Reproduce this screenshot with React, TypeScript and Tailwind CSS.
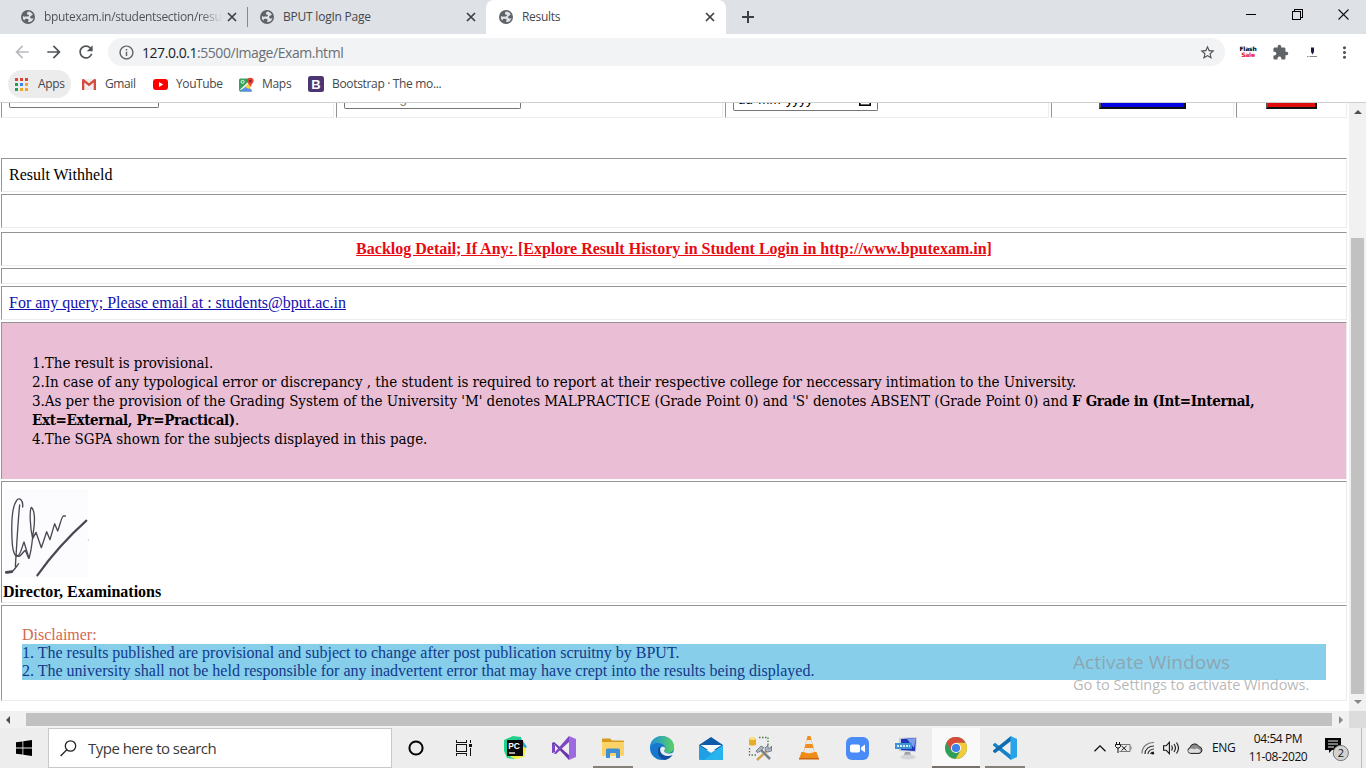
import React from "react";
import {
  MdArrowBack,
  MdArrowForward,
  MdRefresh,
  MdInfoOutline,
  MdStarBorder,
  MdExtension,
  MdMoreVert,
} from "react-icons/md";

const cell = "border border-t-[#949494] border-l-[#949494] border-r-[#ececec] border-b-[#ececec]";

function Globe() {
  return (
    <svg viewBox="0 0 28 28" className="h-[14px] w-[14px] shrink-0">
      <circle cx="14" cy="14" r="14" fill="#5f6368" />
      <path
        d="M15 3c-2 1-4 3-3 5 1 2 4 1 4 3s-3 2-6 2c-2 0-3 1-6-1-1 5 1 8 3 9l1-3c3-1 6-1 7 1s-1 3-1 5c6 1 10-3 11-8-2 1-4 2-6 0s0-4 2-5 3-1 2-3c-2-3-5-5-8-5z"
        fill="#dfe2e6"
      />
    </svg>
  );
}

function CloseIcon() {
  return (
    <svg width="14" height="14" viewBox="0 0 14 14" className="ml-auto shrink-0" stroke="#3c4043" strokeWidth="1.700">
      <path d="M3 3l8 8M11 3l-8 8" />
    </svg>
  );
}

function Tab({ title, active, fade }: { title: string; active?: boolean; fade?: boolean }) {
  return (
    <div
      className={
        active
          ? "flex h-[34px] w-[240px] items-center rounded-t-[8px] bg-white pl-[13px] pr-[9px]"
          : "flex h-[34px] w-[239px] items-center pl-[13px] pr-[8px]"
      }
    >
      <Globe />
      <span
        className={
          fade
            ? "ml-[9px] w-[178px] whitespace-nowrap bg-linear-to-r from-[#4b4e52] from-88% to-transparent bg-clip-text text-[12px] tracking-[-0.32px] text-transparent"
            : "ml-[9px] w-[180px] whitespace-nowrap text-[12px] tracking-[-0.3px] text-[#45484c]"
        }
      >
        {title}
      </span>
      <CloseIcon />
    </div>
  );
}

function TabStrip() {
  return (
    <div className="flex h-[34px] shrink-0 bg-[#dee1e6]">
      <div className="flex w-[247px] justify-end">
        <Tab title="bputexam.in/studentsection/resu" fade />
      </div>
      <div className="mt-[7px] h-[20px] w-px bg-[#85898e]" />
      <div className="flex w-[238px] items-center pl-[12px] pr-[8px]">
        <Globe />
        <span className="ml-[9px] text-[12px] tracking-[-0.22px] text-[#45484c]">BPUT logIn Page</span>
        <CloseIcon />
      </div>
      <Tab title="Results" active />
      <div className="flex w-[43px] items-center justify-center">
        <svg width="12" height="12" viewBox="0 0 12 12" stroke="#3c4043" strokeWidth="2">
          <path d="M6 0v12M0 6h12" />
        </svg>
      </div>
      <div className="ml-auto flex h-[29px] items-center">
        <div className="flex w-[46px] justify-center">
          <div className="h-px w-[10px] bg-black" />
        </div>
        <div className="flex w-[46px] justify-center">
          <svg width="11" height="11" viewBox="0 0 11 11" fill="none" stroke="#000" shapeRendering="crispEdges">
            <path d="M2.5 2.5V.5h8v8h-2M.5 2.500h8v8h-8z" />
          </svg>
        </div>
        <div className="flex w-[46px] justify-center">
          <svg width="11" height="11" viewBox="0 0 11 11" stroke="#111" strokeWidth="1.1">
            <path d="M.5.5l10 10M10.5.5l-10 10" />
          </svg>
        </div>
      </div>
    </div>
  );
}

function Toolbar() {
  return (
    <div className="flex h-[36px] shrink-0 items-center bg-white pl-[6px]">
      <div className="flex w-8 justify-center">
        <MdArrowBack className="h-[20px] w-[20px] text-[#b9bbbe]" />
      </div>
      <div className="flex w-8 justify-center">
        <MdArrowForward className="h-[20px] w-[20px] text-[#505357]" />
      </div>
      <div className="flex w-8 justify-center">
        <MdRefresh className="h-[20px] w-[20px] text-[#505357]" />
      </div>
      <div className="ml-[6px] flex h-[28px] w-[1117px] items-center rounded-full bg-[#f1f3f4] pl-[10px] pr-[9px]">
        <MdInfoOutline className="h-[17px] w-[17px] text-[#5f6368]" />
        <span className="ml-[7px] text-[14px] tracking-[-0.45px] text-[#6b6f74]">
          <span className="text-[#202124]">127.0.0.1</span>:5500/Image/Exam.html
        </span>
        <MdStarBorder className="ml-auto h-[17px] w-[17px] text-[#505357]" />
      </div>
      <div className="ml-[7px] flex w-8 flex-col items-center font-['DejaVu_Sans'] text-[6px] font-bold leading-[6px] tracking-[-0.2px]">
        <span className="text-black">Flash</span>
        <span className="text-[#e0101c]">Sale</span>
      </div>
      <div className="flex w-8 justify-center">
        <MdExtension className="h-[17px] w-[17px] text-[#5f6368]" />
      </div>
      <div className="flex w-8 justify-center">
        <svg width="12" height="12" viewBox="0 0 12 12">
          <path d="M5 1.500h3v4.500l-1.500 2.500-1.500-2.500z" fill="#1d1b45" />
          <path d="M1 10.500h1.500M3.500 10.500H11" stroke="#888" />
        </svg>
      </div>
      <div className="flex w-8 justify-center">
        <MdMoreVert className="h-[19px] w-[19px] text-[#505357]" />
      </div>
    </div>
  );
}

const appColors = ["#dc4437", "#dc4437", "#dc4437", "#1ea05a", "#4081ec", "#eda72b", "#1ea05a", "#eda72b", "#eda72b"];

function Bookmarks() {
  const text = "text-[12px] text-[#45484c] whitespace-nowrap";
  return (
    <div className="flex h-[33px] shrink-0 items-start border-b border-[#cfcfcf] bg-white pl-[8px] pr-2">
      <div className="flex h-[28px] w-[63px] items-center rounded-full bg-[#ececec] pl-[7px]">
        <div className="grid w-[13px] grid-cols-3 gap-[2px]">
          {appColors.map((c, i) => (
            <div key={i} className="h-[3px] w-[3px]" style={{ background: c }} />
          ))}
        </div>
        <span className={text + " ml-[10px] tracking-[-0.3px]"}>Apps</span>
      </div>
      <div className="flex h-[28px] w-[71px] items-center pl-[11px]">
        <svg width="14" height="11" viewBox="0 0 14 11">
          <path d="M1 0h12v11H1z" fill="#eee" />
          <path d="M0 1v10h2.300V3.500L7 7.200l4.700-3.700V11H14V1c0-1-1.200-1.300-2-.7L7 4.300 2 .3C1.200-.3 0 0 0 1z" fill="#d54b3d" />
        </svg>
        <span className={text + " ml-[9px] tracking-[-0.4px]"}>Gmail</span>
      </div>
      <div className="flex h-[28px] w-[86px] items-center pl-[11px]">
        <svg width="15" height="11" viewBox="0 0 15 11">
          <rect width="15" height="11" rx="3" fill="#f00" />
          <path d="M6 3l4.200 2.500L6 8z" fill="#fff" />
        </svg>
        <span className={text + " ml-[8px] tracking-[-0.4px]"}>YouTube</span>
      </div>
      <div className="flex h-[28px] w-[69px] items-center pl-[11px]">
        <svg width="15" height="15" viewBox="0 0 15 15">
          <rect x="0" y="1.500" width="13" height="13" rx="1.500" fill="#34a05b" />
          <path d="M0 13.500L12 2l1 1v10.500L9 10z" fill="#f3f3f3" />
          <path d="M1 14.500l6.500-6 6 6z" fill="#5b8def" />
          <path d="M6 10l6-6 1 4-3 4z" fill="#fbcf3c" />
          <path d="M8 4a3.300 3.300 0 016.600 0c0 2-2.500 3-3.300 6C10.500 7 8 6 8 4z" fill="#e0443a" />
          <circle cx="11.300" cy="4" r="1.200" fill="#8b1d1a" />
          <circle cx="3.600" cy="4.800" r="1.500" fill="none" stroke="#fff" strokeWidth=".9" />
        </svg>
        <span className={text + " ml-[8px] tracking-[-0.3px]"}>Maps</span>
      </div>
      <div className="flex h-[28px] items-center pl-[11px]">
        <svg width="16" height="16" viewBox="0 0 16 16">
          <rect width="16" height="16" rx="2.500" fill="#4c3572" />
          <text x="8" y="12.500" fontSize="13" fontWeight="700" textAnchor="middle" fill="#fff" fontFamily="Liberation Sans">
            B
          </text>
        </svg>
        <span className={text + " ml-[8px] tracking-[-0.33px]"}>Bootstrap · The mo...</span>
      </div>
    </div>
  );
}

function FormRow() {
  const c = "h-full shrink-0 overflow-hidden border border-t-0 border-l-[#949494] border-r-[#ececec] border-b-[#ececec]";
  return (
    <div className="flex h-[15px] shrink-0 gap-[2px] pl-px">
      <div className={c + " w-[333px] pl-[7px]"}>
        <div className="h-[5px] w-[150px] rounded-b-[2px] border border-t-0 border-[#767676]" />
      </div>
      <div className={c + " w-[387px] pl-[7px]"}>
        <div className="flex h-[6px] w-[177px] items-end overflow-hidden rounded-b-[2px] border border-t-0 border-[#767676] pb-[2px] pl-[2px] font-['Liberation_Sans'] text-[13.33px] leading-[15px] text-[#757575]">
          Enter Regd. No
        </div>
      </div>
      <div className={c + " w-[324px] pl-[7px]"}>
        <div className="flex h-[8px] w-[145px] items-end overflow-hidden rounded-b-[2px] border border-t-0 border-[#767676] pl-[4px] pr-[6px] font-['Liberation_Sans'] text-[13.33px] leading-[15px] text-black">
          <span className="mb-[3px] whitespace-pre">
            dd<span className="px-[0.5px]">-</span>mm<span className="px-[0.5px]">-</span>yyyy
          </span>
          <svg className="mb-[4px] ml-auto" width="12" height="12" viewBox="0 0 12 12" fill="none" stroke="#000" strokeWidth="1.600">
            <rect x=".8" y="1.800" width="10.400" height="9.400" />
          </svg>
        </div>
      </div>
      <div className={c + " w-[183px] pl-[47px]"}>
        <div className="h-[6px] w-[87px] border-2 border-t-0 border-l-[#555] border-r-[#111] border-b-[#111] bg-[#0505e0]" />
      </div>
      <div className={c + " w-[111px] pl-[29px]"}>
        <div className="h-[6px] w-[51px] border-2 border-t-0 border-l-[#555] border-r-[#111] border-b-[#111] bg-[#dd0b0b]" />
      </div>
    </div>
  );
}

function Signature() {
  return (
    <svg className="block" width="86" height="91" viewBox="9 50 258 273">
      <rect x="12" y="56" width="252" height="264" fill="#fcfbfd" />
      <g fill="none" stroke="#4b4853" strokeLinecap="round" strokeLinejoin="round">
        <path
          d="M68 110C70 88 58 80 50 90C34 112 34 160 36 205C37 235 42 258 52 257C62 256 66 228 72 215L87 264C96 235 96 210 100 185C106 150 104 118 94 111C88 122 90 170 98 205L108 186L124 232L140 184L150 208L164 160L173 182C180 165 184 140 190 137L196 137"
          strokeWidth="4"
        />
        <path d="M59 104C54 150 50 230 46 288M48 252C60 268 66 246 76 240L86 264M17 306C38 312 46 292 56 280" strokeWidth="4" />
        <path d="M19 306L36 304" strokeWidth="8" />
        <path d="M112 315C150 262 210 195 259 151" strokeWidth="6.500" />
      </g>
      <circle cx="265" cy="209" r="1.500" fill="#777" />
    </svg>
  );
}

function Page() {
  return (
    <main className="flex min-w-0 flex-1 flex-col overflow-hidden bg-white pr-[2px] font-['Liberation_Serif'] text-[16px] text-black">
      <FormRow />
      <div className="ml-px mt-[40px] flex flex-col">
        <div className={cell + " flex h-[34px] items-center pl-[7px]"}>Result Withheld</div>
        <div className={cell + " mt-[2px] h-[34px]"} />
        <div className={cell + " mt-[4px] flex h-[34px] items-center justify-center font-bold text-[#e90a12] underline"}>
          Backlog Detail; If Any: [Explore Result History in Student Login in http://www.bputexam.in]
        </div>
        <div className={cell + " mt-[2px] h-[16px]"} />
        <div className={cell + " mt-[2px] flex h-[34px] items-center pl-[7px] text-[#1010b0] underline"}>
          For any query; Please email at : students@bput.ac.in
        </div>
        <div className="mt-[2px] h-[157px] whitespace-nowrap border border-b-0 border-r-[#ececec] border-t-[#949494] border-l-[#949494] bg-[#eabfd6] pl-[30px] pt-[31px] font-['DejaVu_Serif'] text-[15px] leading-[19px] tracking-[-0.04px] [font-stretch:condensed]">
          <p>1.The result is provisional.</p>
          <p>
            2.In case of any typological error or discrepancy , the student is required to report at their respective
            college for neccessary intimation to the University.
          </p>
          <p>
            3.As per the provision of the Grading System of the University 'M' denotes MALPRACTICE (Grade Point 0) and 'S'
            denotes ABSENT (Grade Point 0) and <b className="tracking-[-0.33px]">F Grade in (Int=Internal,</b>
          </p>
          <p>
            <b className="tracking-[-0.33px]">Ext=External, Pr=Practical)</b>.
          </p>
          <p>4.The SGPA shown for the subjects displayed in this page.</p>
        </div>
        <div className={cell + " mt-[2px] h-[122px] pl-px pt-[5px]"}>
          <Signature />
          <p className="mt-[5px] font-bold leading-[18px]">Director, Examinations</p>
        </div>
        <div className={cell + " mt-[2px] h-[96px] px-[20px] pt-[20px] leading-[18px]"}>
          <p className="text-[#d2694f]">Disclaimer:</p>
          <div className="bg-[#87ceeb] text-[#123a8c]">
            <p>1. The results published are provisional and subject to change after post publication scruitny by BPUT.</p>
            <p>
              2. The university shall not be held responsible for any inadvertent error that may have crept into the
              results being displayed.
            </p>
          </div>
        </div>
      </div>
    </main>
  );
}

function Arrow({ d, c }: { d: string; c: string }) {
  return (
    <svg width="8" height="8" viewBox="0 0 8 8">
      <path d={d} fill={c} />
    </svg>
  );
}

function TaskIcon({ children, w = "w-[49px]" }: { children: React.ReactNode; w?: string }) {
  return <div className={w + " flex h-full shrink-0 items-center justify-center"}>{children}</div>;
}

function Taskbar() {
  return (
    <div className="flex h-[40px] shrink-0 items-stretch bg-[#ededed]">
      <div className="flex w-[48px] items-center justify-center">
        <svg width="16" height="16" viewBox="0 0 16 16">
          <path d="M0 2.300L6.500 1.400V7.600H0zM7.300 1.300L16 0v7.600H7.300zM0 8.400h6.500v6.200L0 13.700zM7.300 8.400H16V16l-8.700-1.300z" />
        </svg>
      </div>
      <div className="flex w-[344px] items-center border border-[#c8c8c8] bg-white pl-[11px]">
        <svg width="17" height="17" viewBox="0 0 17 17" fill="none" stroke="#222" strokeWidth="1.300">
          <circle cx="10.500" cy="6" r="5.200" />
          <path d="M6.800 9.800L.6 16" />
        </svg>
        <span className="ml-[11px] text-[15px] tracking-[-0.52px] text-[#3a3a3a]">Type here to search</span>
      </div>
      <TaskIcon w="w-[48px]">
        <svg width="16" height="16" viewBox="0 0 16 16">
          <circle cx="8" cy="8" r="6.600" fill="none" stroke="#000" strokeWidth="2" />
        </svg>
      </TaskIcon>
      <TaskIcon w="w-[48px]">
        <svg width="16" height="16" viewBox="0 0 16 16" fill="none" stroke="#111" shapeRendering="crispEdges">
          <path d="M.5 0v2.500h10V0M.5 4.500h10v7H.5zM.5 16v-2.500h10V16M14.500 0v3M14.500 8v8" />
          <path d="M13 4h3v3h-3z" fill="#111" stroke="none" />
        </svg>
      </TaskIcon>
      <div className="w-[2px]" />
      <TaskIcon>
        <svg width="24" height="24" viewBox="0 0 24 24">
          <path d="M1 4L10 0l8 1 2 8-9 14-7-1-3-7z" fill="#21d28b" />
          <path d="M14 2l6 3 4 6-4 3z" fill="#22a8dd" />
          <path d="M19 10l4 2-2 9-8 2-6-2z" fill="#eef23c" />
          <rect x="4" y="4" width="16" height="16" fill="#0a0a0a" />
          <text x="5.200" y="12.500" fontSize="8.500" fontWeight="700" fill="#fff" fontFamily="Liberation Sans">
            PC
          </text>
          <path d="M6 17h6" stroke="#fff" strokeWidth="1.300" />
        </svg>
      </TaskIcon>
      <TaskIcon>
        <svg width="24" height="24" viewBox="0 0 24 24">
          <path d="M17 0l7 3v18l-7 3z" fill="#9d6be0" />
          <path d="M0 7l2-1 15 13v5L2 8v8l-2 1z" fill="#6b35b0" />
          <path d="M0 17V7l3 2v7zM3 16l14-16v6L4 18l-2 0z" fill="#7e46c4" />
          <path d="M17 7l-6 5 6 5z" fill="#ededed" />
        </svg>
      </TaskIcon>
      <TaskIcon>
        <div className="flex h-full w-[40px] flex-col items-center justify-between pt-[10px]">
          <svg width="22" height="21" viewBox="0 0 22 21">
            <path d="M0 1.500C0 .7.500.5 1 .5h7l2 2h11a1 1 0 011 1V8H0z" fill="#d79a1c" />
            <path d="M0 4h22v13a1 1 0 01-1 1H1a1 1 0 01-1-1z" fill="#fdd367" />
            <path d="M4 12a1.500 1.500 0 011.500-1.500h11A1.500 1.500 0 0118 12v8h-4v-4a1 1 0 00-1-1H9a1 1 0 00-1 1v4H4z" fill="#3d8fd6" />
          </svg>
          <div className="h-[2px] w-[40px] bg-[#858078]" />
        </div>
      </TaskIcon>
      <TaskIcon>
        <svg width="24" height="24" viewBox="0 0 24 24">
          <defs>
            <linearGradient id="eg" x1="0" x2="1">
              <stop offset="0" stopColor="#1c8fdf" />
              <stop offset="1" stopColor="#5ad35f" />
            </linearGradient>
          </defs>
          <circle cx="12" cy="12" r="12" fill="#1779cd" />
          <path d="M0 12C0 5 5 0 12 0s12 5 12 11c0 4-3 6-6 6-3 0-4-1-4-2s2-1.500 1-4C14 8 11 7 8 7c-4 0-7 2-8 5z" fill="url(#eg)" />
          <path d="M9 11c-3 5 0 12 6 13 3-.6 6-2.500 7.500-5-4 2-10 1-12-3-.8-2-.5-4 .5-5z" fill="#124e9e" />
          <path d="M10.500 12c1-2 4-1.500 4.500 0s-1 2-1 3c0 1.500 2 2.500 5 2.500 2 0 3-.5 4.500-1.500-.3 1.500-.7 2.300-1.300 3-4 2-9.500 1-11.300-2.500-.8-1.700-.9-3-.4-4.500z" fill="#ededed" />
        </svg>
      </TaskIcon>
      <TaskIcon>
        <svg width="24" height="23" viewBox="0 0 24 23">
          <path d="M0 8L12 0l12 8v5H0z" fill="#0d5aa7" />
          <path d="M0 8l12 8L24 8v14a1 1 0 01-1 1H1a1 1 0 01-1-1z" fill="#1f9fe4" />
          <path d="M24 8L5 23h18a1 1 0 001-1z" fill="#27b3ee" />
          <path d="M1.500 8h21L12 15z" fill="#f4f8fb" />
        </svg>
      </TaskIcon>
      <TaskIcon>
        <svg width="24" height="25" viewBox="0 0 24 25">
          <path d="M1 2.500v6C1 10 8 10 8 8.500v-6z" fill="#e7ae25" />
          <ellipse cx="4.500" cy="2.500" rx="3.500" ry="1.500" fill="#f8dc7c" />
          <path d="M11 1.500h9v8M1.500 12v7H9" fill="none" stroke="#4e7a48" strokeWidth="1.300" strokeDasharray="1.500 1.500" />
          <path d="M21 13L9 24" stroke="#d0a44c" strokeWidth="2.400" />
          <path d="M12 13l10 10" stroke="#76818e" strokeWidth="2.600" />
          <path d="M8 15l5-5 3 1.500-4 4-3 1zM17 12l3-3 0 3 2.500 0 1-2 0 5-4 1-2-1z" fill="#a9b4c0" stroke="#59636e" strokeWidth=".7" />
        </svg>
      </TaskIcon>
      <TaskIcon>
        <svg width="20" height="24" viewBox="0 0 20 24">
          <path d="M2.500 16h15L20 23H0z" fill="#f08a16" />
          <path d="M8.500 0h3l4.500 18c-2 2.500-10 2.500-12 0z" fill="#f28c1a" />
          <path d="M7.700 4h4.600l1 4H6.700zM5.700 12h8.600l.9 4c-2 1.500-8.500 1.500-10.400 0z" fill="#e9e9e9" />
          <path d="M0 22h20v1.500H0z" fill="#c9650c" />
        </svg>
      </TaskIcon>
      <TaskIcon>
        <svg width="23" height="23" viewBox="0 0 23 23">
          <rect width="23" height="23" rx="6" fill="#4a8cf7" />
          <rect x="4" y="7.500" width="10" height="8" rx="1.800" fill="#fff" />
          <path d="M15 10.500l4-3v8l-4-3z" fill="#fff" />
        </svg>
      </TaskIcon>
      <TaskIcon>
        <svg width="24" height="23" viewBox="0 0 24 23">
          <path d="M4 1l18-1-1 15-17-1z" fill="#c6cbd8" />
          <path d="M6 2l15-1-1 13-14-1z" fill="#1c36b8" />
          <path d="M12 2l9-1-2 10z" fill="#7e9cec" />
          <rect x="0" y="6" width="17" height="6" fill="#3d93d6" />
          <path d="M2 9h13" stroke="#d8ecfa" strokeWidth="2" strokeDasharray="2 1" />
          <path d="M10 15h5l1 3h-7z" fill="#9da2aa" />
          <ellipse cx="13" cy="20" rx="7.500" ry="2.600" fill="#d3d5d8" />
        </svg>
      </TaskIcon>
      <div className="ml-px flex w-[48px] shrink-0 flex-col items-center justify-between bg-[#f9f9f9] pt-[9px]">
        <svg width="22" height="22" viewBox="0 0 22 22">
          <circle cx="11" cy="11" r="11" fill="#2f9e57" />
          <path d="M1.500 5.500A11 11 0 0120.600 5.800H11L6.300 13.500z" fill="#d94a3a" />
          <path d="M20.600 5.800H11l4.500 8L10.500 22a11 11 0 0010.100-16.200z" fill="#f4ca36" />
          <circle cx="11" cy="11" r="5.100" fill="#fff" />
          <circle cx="11" cy="11" r="4.100" fill="#3f7fe8" />
        </svg>
        <div className="h-[2px] w-full bg-[#77736c]" />
      </div>
      <div className="ml-[5px] flex w-[40px] shrink-0 flex-col items-center justify-between pt-[8px]">
        <svg width="24" height="24" viewBox="0 0 24 24">
          <path d="M0 8.500l2-1.700L18 19v5L0 9.500z" fill="#1583c7" />
          <path d="M0 15.500l2 1.700L18 5V0L0 14.500z" fill="#0f6cb0" />
          <path d="M17.500 0L24 3v18l-6.500 3z" fill="#27a3ea" />
        </svg>
        <div className="h-[2px] w-full bg-[#858078]" />
      </div>
      <div className="ml-auto flex items-center">
        <TaskIcon w="w-[24px]">
          <svg width="12" height="7" viewBox="0 0 12 7" fill="none" stroke="#111" strokeWidth="1.300">
            <path d="M.5 6.300L6 .9l5.500 5.400" />
          </svg>
        </TaskIcon>
        <TaskIcon w="w-[23px]">
          <svg width="17" height="12" viewBox="0 0 17 12" fill="none" stroke="#111">
            <path d="M6 2.500h9v7H4.500" stroke="#777" />
            <path d="M16 4.500v3" stroke="#777" />
            <path d="M1.500 0v2M4.500 0v2M.5 2.500h5v2L4 6H2L.5 4.500zM3 6v5M6.500 4l5 4.500M11.500 4l-5 4.500" />
          </svg>
        </TaskIcon>
        <TaskIcon w="w-[25px]">
          <svg width="14" height="14" viewBox="0 0 14 14" fill="none" stroke="#333" strokeWidth="1.200">
            <path d="M1 12.500C1 6 6 1.500 13 1.500" stroke="#777" />
            <path d="M4 13c0-5 4-8 9-8M7 13c0-3 3-5 6-5M9.500 13c.5-1.500 2-2 3.500-2" />
            <circle cx="11.800" cy="12.300" r="1.300" fill="#111" stroke="none" />
          </svg>
        </TaskIcon>
        <TaskIcon w="w-[22px]">
          <svg width="17" height="14" viewBox="0 0 17 14" fill="none" stroke="#111" strokeWidth="1.100">
            <path d="M.6 4.800h2.500l3.300-3.500v11.400L3.100 9.200H.6zM8.500 4.500c1 1.500 1 3.500 0 5M11 3c1.800 2.500 1.800 5.500 0 8M13.500 1.500c2.500 3.500 2.500 7.500 0 11" />
          </svg>
        </TaskIcon>
        <TaskIcon w="w-[26px]">
          <svg width="16" height="11" viewBox="0 0 16 11">
            <path d="M3.500 10.400a3 3 0 01-.5-5.800 4.800 4.800 0 019-1 3.500 3.500 0 01.5 6.800z" fill="#8c8c8c" stroke="#222" />
            <path d="M1.200 8.500c0-3 4-4 6-2 2-2 5-.5 6.500 1.500l-2 1.800H3z" fill="#dedede" />
          </svg>
        </TaskIcon>
        <span className="w-[33px] pl-[4px] text-[12px] tracking-[-0.4px] text-[#111]">ENG</span>
        <div className="flex w-[74px] flex-col items-center pb-[1px] text-[12px] leading-[18px] tracking-[-0.4px] text-[#111]">
          <span>04:54 PM</span>
          <span>11-08-2020</span>
        </div>
        <div className="ml-[10px] mr-[12px] mt-[4px] h-[26px] w-[24px]">
          <svg width="24" height="25" viewBox="0 0 24 25">
            <path d="M0 1h16v12H7l-3 3v-3H0z" fill="#050505" />
            <path d="M3 4h10M3 7h10M3 10h6" stroke="#ededed" />
            <circle cx="15.800" cy="16" r="7.600" fill="#d2d2d2" stroke="#777" />
            <text x="15.800" y="20" fontSize="11" textAnchor="middle" fill="#111" fontFamily="Open Sans">
              2
            </text>
          </svg>
        </div>
        <div className="h-full w-px bg-[#bdbdbd]" />
        <div className="w-[4px]" />
      </div>
    </div>
  );
}

export default function App() {
  return (
    <div className="relative flex h-[768px] w-[1366px] flex-col overflow-hidden bg-white font-['Open_Sans',sans-serif]">
      <TabStrip />
      <Toolbar />
      <Bookmarks />
      <div className="flex min-h-0 flex-1">
        <Page />
        <div className="flex w-[17px] shrink-0 flex-col items-center bg-[#f1f1f1] pt-[5px]">
          <Arrow d="M0 6L4 2l4 4z" c="#505050" />
          <div className="mt-[122px] h-[456px] w-[13px] bg-[#c1c1c1]" />
          <div className="mt-[4px] flex">
            <Arrow d="M0 2l4 4 4-4z" c="#868686" />
          </div>
        </div>
      </div>
      <div className="flex h-[17px] shrink-0 items-center bg-[#f1f1f1]">
        <div className="flex w-[26px] pl-[4px]">
          <Arrow d="M6 0L2 4l4 4z" c="#505050" />
        </div>
        <div className="h-[13px] w-[1306px] bg-[#c1c1c1]" />
        <div className="flex w-[17px] justify-center">
          <Arrow d="M2 0l4 4-4 4z" c="#868686" />
        </div>
        <div className="h-full flex-1 bg-[#dcdcdc]" />
      </div>
      <Taskbar />
      <div className="pointer-events-none absolute left-[1073px] top-[650px] whitespace-nowrap text-[#8f8f8f]/65">
        <p className="text-[19px] leading-[24px] tracking-[0.08px]">Activate Windows</p>
        <p className="text-[14.500px] leading-[22px] tracking-[-0.04px]">Go to Settings to activate Windows.</p>
      </div>
    </div>
  );
}
